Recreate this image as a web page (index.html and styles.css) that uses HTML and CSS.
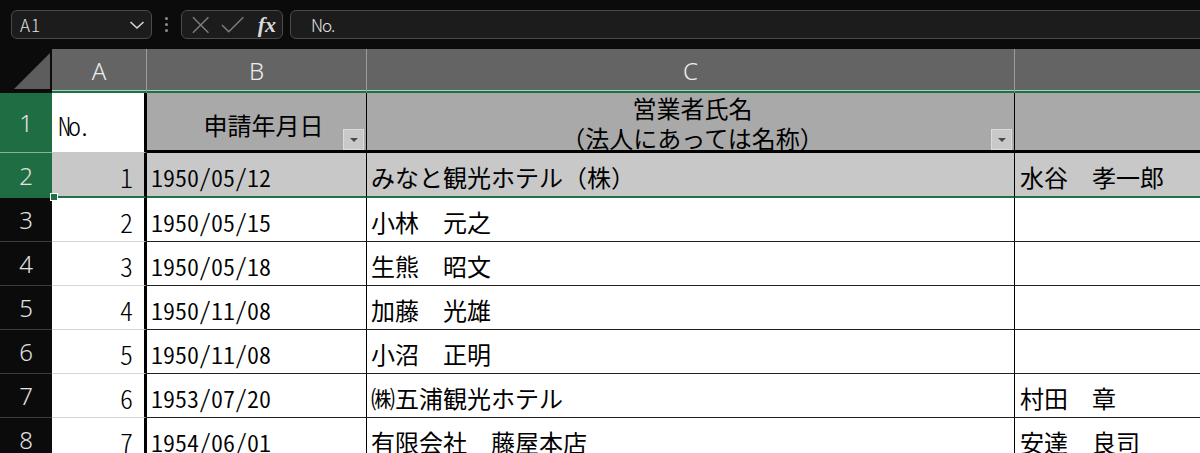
FILE: index.html
```html
<!DOCTYPE html>
<html lang="ja">
<head>
    <meta charset="UTF-8">
    <title>申請一覧 - Excel</title>
    <link rel="stylesheet" href="styles.css">
</head>
<body>
    <div class="toolbar">
        <div class="namebox">
            <span>A1</span>
            <svg class="chevron" width="16" height="10" viewBox="0 0 16 10"><path d="M1.5 2 L8 8 L14.5 2" fill="none" stroke="#d6d6d6" stroke-width="1.6"/></svg>
        </div>
        <div class="grip"><i></i><i></i><i></i></div>
        <div class="fxbox">
            <svg width="20" height="18" viewBox="0 0 20 18"><path d="M2 1 L18 17 M18 1 L2 17" stroke="#7d7d7d" stroke-width="1.5"/></svg>
            <svg width="24" height="18" viewBox="0 0 24 18"><path d="M1 9 L8 16 L23 1" fill="none" stroke="#7d7d7d" stroke-width="1.5"/></svg>
            <span class="fx">fx</span>
        </div>
        <div class="formula">No.</div>
    </div>

    <div class="sheet">
        <!-- column headers -->
        <div class="corner"><span class="tri"></span></div>
        <div class="colhead">A</div>
        <div class="colhead">B</div>
        <div class="colhead">C</div>
        <div class="colhead last"></div>

        <!-- row 1: table titles -->
        <div class="rowhead sel">1</div>
        <div class="cell num-a active">No.</div>
        <div class="cell title b">
            <span>申請年月日</span>
            <span class="filter"></span>
        </div>
        <div class="cell title c">
            <span class="two-line"><span>営業者氏名</span><span>（法人にあっては名称）</span></span>
            <span class="filter"></span>
        </div>
        <div class="cell title d"></div>

        <!-- row 2 -->
        <div class="rowhead sel sel-end">2</div>
        <div class="cell a hl">1</div>
        <div class="cell b hl">1950/05/12</div>
        <div class="cell c hl">みなと観光ホテル（株）</div>
        <div class="cell d hl">水谷　孝一郎</div>

        <div class="rowhead">3</div>
        <div class="cell a">2</div>
        <div class="cell b">1950/05/15</div>
        <div class="cell c">小林　元之</div>
        <div class="cell d"></div>

        <div class="rowhead">4</div>
        <div class="cell a">3</div>
        <div class="cell b">1950/05/18</div>
        <div class="cell c">生熊　昭文</div>
        <div class="cell d"></div>

        <div class="rowhead">5</div>
        <div class="cell a">4</div>
        <div class="cell b">1950/11/08</div>
        <div class="cell c">加藤　光雄</div>
        <div class="cell d"></div>

        <div class="rowhead">6</div>
        <div class="cell a">5</div>
        <div class="cell b">1950/11/08</div>
        <div class="cell c">小沼　正明</div>
        <div class="cell d"></div>

        <div class="rowhead">7</div>
        <div class="cell a">6</div>
        <div class="cell b">1953/07/20</div>
        <div class="cell c">㈱五浦観光ホテル</div>
        <div class="cell d">村田　章</div>

        <div class="rowhead">8</div>
        <div class="cell a">7</div>
        <div class="cell b">1954/06/01</div>
        <div class="cell c">有限会社　藤屋本店</div>
        <div class="cell d">安達　良司</div>
    </div>
</body>
</html>
```

FILE: styles.css
```css
body {
    margin: 0;
    background: #0b0b0b;
    overflow: hidden;
    font-family: "Noto Sans CJK JP", "Noto Sans", sans-serif;
}

/* name box + formula bar */
.toolbar {
    display: flex;
    align-items: center;
    height: 49px;
    padding-left: 11px;
    box-sizing: border-box;
    background: #0b0b0b;
    white-space: nowrap;
}
.namebox, .fxbox, .formula {
    height: 29px;
    box-sizing: border-box;
    border: 1px solid #4a4a4a;
    border-radius: 6px;
    background: #1c1c1c;
    display: flex;
    align-items: center;
    color: #e4e4e4;
    font-size: 17px;
    font-weight: 300;
}
.namebox {
    width: 141px;
    padding: 0 6px 0 8px;
    justify-content: space-between;
    letter-spacing: 1px;
}
.grip {
    width: 29px;
    display: flex;
    flex-direction: column;
    align-items: center;
    gap: 3px;
}
.grip i {
    width: 3px;
    height: 3px;
    border-radius: 50%;
    background: #8c8c8c;
}
.fxbox {
    width: 102px;
    padding: 0 6px 0 9px;
    gap: 11px;
}
.fx {
    font-family: "Liberation Serif", serif;
    font-style: italic;
    font-weight: bold;
    font-size: 22px;
    color: #d9d9d9;
    margin-left: 2px;
}
.formula {
    margin-left: 7px;
    flex: 1;
    margin-right: -20px;
    padding-left: 20px;
    letter-spacing: -1px;
}

/* worksheet grid */
.sheet {
    display: grid;
    grid-template-columns: 52px 95px 220px 648px 1fr;
    grid-template-rows: 44px 60px 45px repeat(6, 44px);
    background: #fff;
    color: #000;
    font-size: 24px;
    font-weight: 350;
}
.corner {
    background: #0b0b0b;
    position: relative;
    border-bottom: 2px solid #0b0b0b;
}
.tri {
    position: absolute;
    right: 2px;
    bottom: 2px;
    width: 0;
    height: 0;
    border-left: 36px solid transparent;
    border-bottom: 36px solid #5d5d5d;
}
.colhead {
    background: #646464;
    color: #ececec;
    font-family: "Noto Sans", sans-serif;
    font-weight: 300;
    font-size: 24px;
    display: flex;
    align-items: center;
    justify-content: center;
    border-right: 1px solid #9d9d9d;
    border-bottom: 2px solid #1f7145;
    box-shadow: inset 0 -1px 0 #9fd6b8;
    padding-top: 1px;
    box-sizing: border-box;
}
.colhead.last {
    border-right: none;
}
.rowhead {
    background: #0b0b0b;
    color: #e2e2e2;
    font-family: "Noto Sans", sans-serif;
    font-weight: 300;
    font-size: 24px;
    display: flex;
    align-items: center;
    justify-content: center;
    border-bottom: 1px solid #3c3c3c;
    box-sizing: border-box;
}
.rowhead.sel {
    background: #1f6e43;
    border-bottom: 1px solid #7fb899;
}
.rowhead.sel-end {
    border-bottom: none;
}

.cell {
    display: flex;
    align-items: center;
    box-sizing: border-box;
    position: relative;
    white-space: nowrap;
    border-bottom: 1px solid #222;
    padding-top: 3px;
}
.cell.a, .cell.num-a {
    justify-content: flex-end;
    padding-right: 11px;
    border-right: 3px solid #000;
    border-bottom-color: #d6d6d6;
    font-size: 26px;
    font-weight: 300;
    font-feature-settings: "hwid";
}
.cell.num-a {
    justify-content: flex-start;
    padding-left: 6px;
    letter-spacing: -3px;
    border-bottom: 1px solid #c8c8c8;
}
.cell.b {
    padding-left: 4px;
    border-right: 1px solid #000;
    font-feature-settings: "hwid";
}
.cell.c {
    padding-left: 4px;
    border-right: 1px solid #000;
    font-weight: 400;
}
.cell.d {
    padding-left: 5px;
    font-weight: 400;
}

/* header titles in row 1 */
.cell.title {
    background: #a9a9a9;
    border-bottom: 3px solid #000;
    justify-content: center;
    text-align: center;
    font-weight: 400;
    font-feature-settings: normal;
    padding-top: 2px;
}
.cell.title.b {
    padding-left: 14px;
    padding-top: 6px;
}
.two-line {
    display: flex;
    flex-direction: column;
    align-items: center;
    line-height: 30px;
}
.filter {
    position: absolute;
    right: 2px;
    bottom: 0;
    width: 21px;
    height: 21px;
    box-sizing: border-box;
    background: #c9c9c9;
    border: 1px solid #dcdcdc;
}
.filter::after {
    content: "";
    position: absolute;
    left: 6px;
    top: 8px;
    border-left: 4px solid transparent;
    border-right: 4px solid transparent;
    border-top: 4px solid #4a4a4a;
}

/* selected second row */
.cell.hl {
    background: #c8c8c8;
    border-bottom: 2px solid #1f7145;
}
.cell.a.hl::after {
    content: "";
    position: absolute;
    left: -2px;
    bottom: -5px;
    width: 6px;
    height: 6px;
    background: #1f7145;
    border: 1px solid #fff;
}
```
